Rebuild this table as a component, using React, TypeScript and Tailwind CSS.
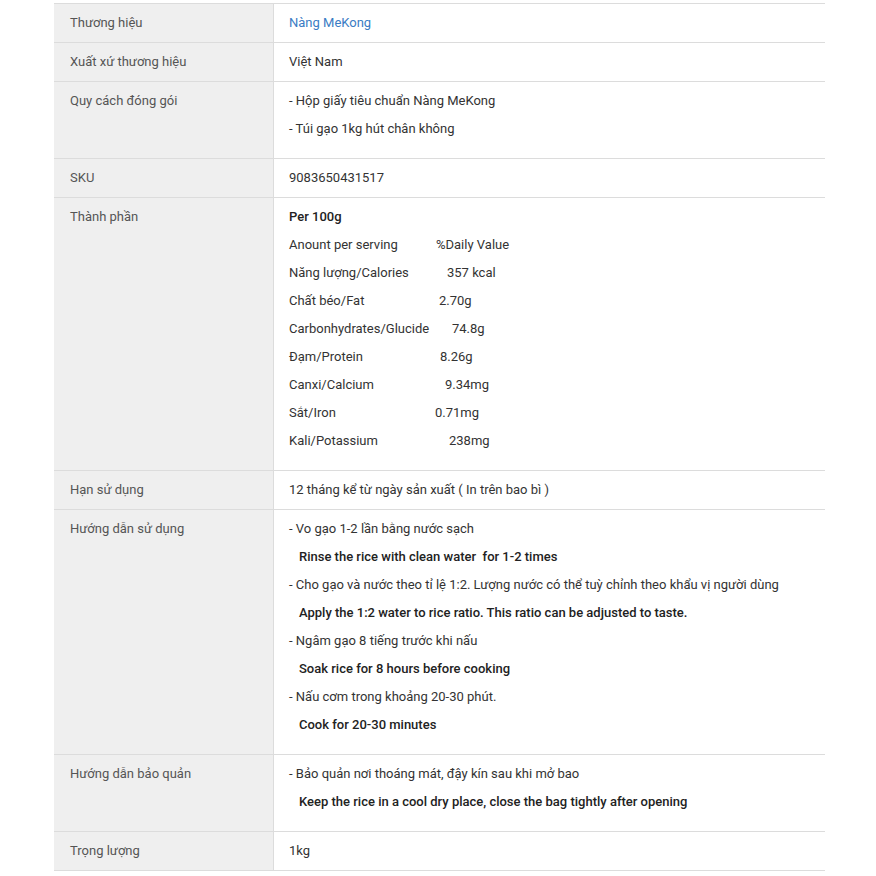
const nutrition = [
  { label: 'Anount per serving', value: '%Daily Value', w: 'w-[147px]' },
  { label: 'Năng lượng/Calories', value: '357 kcal', w: 'w-[158px]' },
  { label: 'Chất béo/Fat', value: '2.70g', w: 'w-[150px]' },
  { label: 'Carbonhydrates/Glucide', value: '74.8g', w: 'w-[163px]' },
  { label: 'Đạm/Protein', value: '8.26g', w: 'w-[151px]' },
  { label: 'Canxi/Calcium', value: '9.34mg', w: 'w-[156px]' },
  { label: 'Sắt/Iron', value: '0.71mg', w: 'w-[146px]' },
  { label: 'Kali/Potassium', value: '238mg', w: 'w-[160px]' },
];

const Line = ({ children, en }: { children: React.ReactNode; en?: boolean }) => (
  <p className={en ? 'leading-[28px] pl-[10px] text-[#222] font-medium' : 'leading-[28px]'}>{children}</p>
);

const Row = ({ label, multi, children }: { label: string; multi?: boolean; children: React.ReactNode }) => (
  <div className="grid grid-cols-[220px_1fr] border-b border-[#dcdcdc]">
    <div className="bg-[#efefef] border-r border-[#dcdcdc] pl-4 pt-[5px] pb-[5px] leading-[28px] text-[#555]">
      {label}
    </div>
    <div className={`pl-[15px] pt-[5px] text-[#333] ${multi ? 'pb-[15px]' : 'pb-[5px]'}`}>{children}</div>
  </div>
);

export default function App() {
  return (
    <div className="min-h-[876px] w-[876px] bg-white pt-[3px] pl-[54px] font-['Roboto','Liberation_Sans',sans-serif] text-[13px]">
      <div className="w-[771px] border-t border-[#dcdcdc]">
        <Row label="Thương hiệu">
          <Line>
            <span className="text-[#3a7cc4]">Nàng MeKong</span>
          </Line>
        </Row>
        <Row label="Xuất xứ thương hiệu">
          <Line>Việt Nam</Line>
        </Row>
        <Row label="Quy cách đóng gói" multi>
          <Line>- Hộp giấy tiêu chuẩn Nàng MeKong</Line>
          <Line>- Túi gạo 1kg hút chân không</Line>
        </Row>
        <Row label="SKU">
          <Line>9083650431517</Line>
        </Row>
        <Row label="Thành phần" multi>
          <p className="leading-[28px] font-medium text-[#222]">Per 100g</p>
          {nutrition.map((n) => (
            <p key={n.label} className="leading-[28px] flex">
              <span className={`${n.w} shrink-0`}>{n.label}</span>
              <span>{n.value}</span>
            </p>
          ))}
        </Row>
        <Row label="Hạn sử dụng">
          <Line>12 tháng kể từ ngày sản xuất ( In trên bao bì )</Line>
        </Row>
        <Row label="Hướng dẫn sử dụng" multi>
          <Line>- Vo gạo 1-2 lần bằng nước sạch</Line>
          <Line en>Rinse the rice with clean water&nbsp; for 1-2 times</Line>
          <Line>- Cho gạo và nước theo tỉ lệ 1:2. Lượng nước có thể tuỳ chỉnh theo khẩu vị người dùng</Line>
          <Line en>Apply the 1:2 water to rice ratio. This ratio can be adjusted to taste.</Line>
          <Line>- Ngâm gạo 8 tiếng trước khi nấu</Line>
          <Line en>Soak rice for 8 hours before cooking</Line>
          <Line>- Nấu cơm trong khoảng 20-30 phút.</Line>
          <Line en>Cook for 20-30 minutes</Line>
        </Row>
        <Row label="Hướng dẫn bảo quản" multi>
          <Line>- Bảo quản nơi thoáng mát, đậy kín sau khi mở bao</Line>
          <Line en>Keep the rice in a cool dry place, close the bag tightly after opening</Line>
        </Row>
        <Row label="Trọng lượng">
          <Line>1kg</Line>
        </Row>
      </div>
    </div>
  );
}
